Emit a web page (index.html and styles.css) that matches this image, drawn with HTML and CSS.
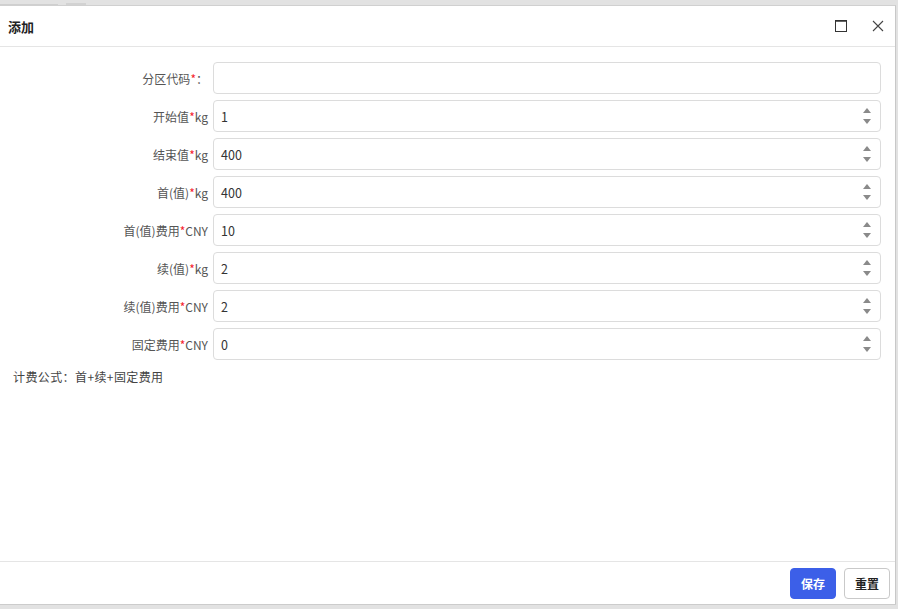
FILE: index.html
```html
<!DOCTYPE html>
<html lang="zh">
<head>
<meta charset="utf-8">
<title>添加</title>
<link rel="stylesheet" href="styles.css">
</head>
<body>
<div class="topstrip">
  <span class="tab tab1"></span>
  <span class="tab tab2"></span>
</div>
<div class="modal">
  <div class="header">
    <span class="title">添加</span>
    <span class="tools">
      <svg class="ico" width="14" height="14" viewBox="0 0 14 14"><rect x="1.5" y="1.5" width="11" height="11" fill="none" stroke="#333" stroke-width="1"/><line x1="1.5" y1="2" x2="12.5" y2="2" stroke="#333" stroke-width="1.5"/></svg>
      <svg class="ico close" width="14" height="14" viewBox="0 0 14 14"><path d="M2 2 L12 12 M12 2 L2 12" stroke="#444" stroke-width="1.1" fill="none"/></svg>
    </span>
  </div>
  <div class="body">
    <div class="row">
      <label class="lbl">分区代码<span class="req">*</span>：</label>
      <div class="input"></div>
    </div>
    <div class="row">
      <label class="lbl">开始值<span class="req">*</span>kg</label>
      <div class="input num"><span class="val">1</span><span class="spin"><i class="up"></i><i class="down"></i></span></div>
    </div>
    <div class="row">
      <label class="lbl">结束值<span class="req">*</span>kg</label>
      <div class="input num"><span class="val">400</span><span class="spin"><i class="up"></i><i class="down"></i></span></div>
    </div>
    <div class="row">
      <label class="lbl">首(值)<span class="req">*</span>kg</label>
      <div class="input num"><span class="val">400</span><span class="spin"><i class="up"></i><i class="down"></i></span></div>
    </div>
    <div class="row">
      <label class="lbl">首(值)费用<span class="req">*</span>CNY</label>
      <div class="input num"><span class="val">10</span><span class="spin"><i class="up"></i><i class="down"></i></span></div>
    </div>
    <div class="row">
      <label class="lbl">续(值)<span class="req">*</span>kg</label>
      <div class="input num"><span class="val">2</span><span class="spin"><i class="up"></i><i class="down"></i></span></div>
    </div>
    <div class="row">
      <label class="lbl">续(值)费用<span class="req">*</span>CNY</label>
      <div class="input num"><span class="val">2</span><span class="spin"><i class="up"></i><i class="down"></i></span></div>
    </div>
    <div class="row">
      <label class="lbl">固定费用<span class="req">*</span>CNY</label>
      <div class="input num"><span class="val">0</span><span class="spin"><i class="up"></i><i class="down"></i></span></div>
    </div>
    <div class="formula">计费公式：首+续+固定费用</div>
  </div>
  <div class="footer">
    <button class="btn primary">保存</button>
    <button class="btn">重置</button>
  </div>
</div>
</body>
</html>
```
FILE: styles.css
```css
html, body {
  margin: 0;
  padding: 0;
}
body {
  width: 898px;
  height: 609px;
  background: #e2e2e2;
  font-family: "Noto Sans CJK SC", "Noto Sans", sans-serif;
  font-size: 12px;
  color: #555;
  overflow: hidden;
}
.topstrip {
  height: 5px;
  display: flex;
  align-items: flex-start;
}
.tab {
  display: block;
  height: 4px;
  border-bottom: 1px solid #cfcfcf;
}
.tab1 { width: 58px; }
.tab2 { width: 20px; margin-left: 8px; background: #d2d2d2; height: 2px; margin-top: 3px; border: 0; }
.modal {
  width: 896px;
  height: 599px;
  background: #fff;
  border-right: 1px solid #c8c8c8;
  border-top: 1px solid #d0d0d0;
  box-sizing: border-box;
  display: flex;
  flex-direction: column;
  box-shadow: 0 1px 0 #cccccc;
}
.header {
  height: 41px;
  box-sizing: border-box;
  border-bottom: 1px solid #e5e5e5;
  display: flex;
  align-items: center;
  justify-content: space-between;
  padding: 0 10px 0 8px;
}
.title {
  font-size: 13px;
  font-weight: bold;
  color: #222;
}
.tools {
  display: flex;
  align-items: center;
  gap: 23px;
}
.ico { display: block; }
.body {
  flex: 1;
  padding: 15px 14px 0 0;
}
.row {
  display: flex;
  align-items: center;
  height: 32px;
  margin-bottom: 6px;
}
.lbl {
  width: 213px;
  box-sizing: border-box;
  text-align: right;
  padding-right: 5px;
  color: #555;
  white-space: nowrap;
}
.req { color: #f5222d; }
.input {
  flex: 1;
  height: 32px;
  box-sizing: border-box;
  border: 1px solid #dcdcdc;
  border-radius: 4px;
  display: flex;
  align-items: center;
  padding: 0 9px 0 7px;
  color: #333;
  font-size: 12.5px;
}
.val { flex: 1; }
.spin {
  display: flex;
  flex-direction: column;
  gap: 6px;
}
.spin i {
  display: block;
  width: 0;
  height: 0;
  border-left: 4.5px solid transparent;
  border-right: 4.5px solid transparent;
}
.spin .up { border-bottom: 5px solid #8a8a8a; }
.spin .down { border-top: 5px solid #8a8a8a; }
.formula {
  padding-left: 13px;
  margin-top: 8px;
  color: #444;
  letter-spacing: 0.4px;
}
.footer {
  height: 43px;
  box-sizing: border-box;
  border-top: 1px solid #e5e5e5;
  display: flex;
  justify-content: flex-end;
  align-items: center;
  gap: 8px;
  padding: 0 5px 0 0;
}
.btn {
  height: 31px;
  width: 46px;
  border: 1px solid #c9c9c9;
  border-radius: 4px;
  background: #fff;
  font-family: "Noto Sans CJK SC", sans-serif;
  font-size: 12px;
  font-weight: bold;
  color: #222;
  padding: 0;
}
.btn.primary {
  background: #3c5fe8;
  border-color: #3c5fe8;
  color: #fff;
}
```
